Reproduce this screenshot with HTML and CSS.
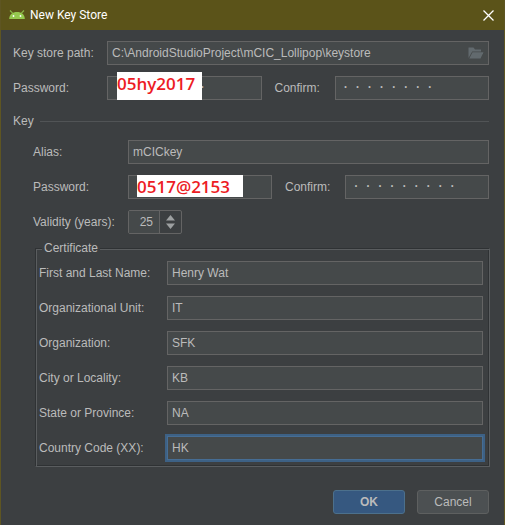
FILE: index.html
```html
<!DOCTYPE html>
<html lang="en">
<head>
<meta charset="utf-8">
<title>New Key Store</title>
<link rel="stylesheet" href="styles.css">
</head>
<body>
<form class="dialog">
  <header class="titlebar">
    <svg class="logo" width="16" height="10" viewBox="0 0 16 10" aria-hidden="true">
      <path d="M1 0.500 3.600 3.200M15 0.500 12.400 3.200" stroke="#8bb84a" stroke-width="1.200"/>
      <path d="M0.200 9C0.200 4.600 3.600 2 8 2s7.800 2.600 7.800 7z" fill="#95c94f"/>
      <circle cx="4.500" cy="6" r="0.900" fill="#fff"/>
      <circle cx="11.500" cy="6" r="0.900" fill="#fff"/>
    </svg>
    <h1 class="title">New Key Store</h1>
    <button class="close" type="button" aria-label="Close">
      <svg width="11" height="11" viewBox="0 0 11 11"><path d="M0.500 0.500l10 10M10.500 0.500l-10 10" stroke="#fff" stroke-width="1.300"/></svg>
    </button>
  </header>
  <main class="content">
    <div class="row store-row">
      <label for="path">Key store path:</label>
      <div class="holder">
        <input class="field" id="path" type="text" value="C:\AndroidStudioProject\mCIC_Lollipop\keystore">
        <button class="browse" type="button" aria-label="Browse">
          <svg width="16" height="12" viewBox="0 0 16 12"><path d="M0.500 11V0.500h5l1.500 2h6V4.500H4.200z" fill="#626a6e"/><path d="M1.300 11.500 4.500 5.200h11L12.500 11.500z" fill="#626a6e"/></svg>
        </button>
      </div>
    </div>
    <div class="row store-row">
      <label for="store-pass">Password:</label>
      <div class="pair">
        <div class="holder">
          <input class="field secret" id="store-pass" type="text" value="· · · · · · · ·">
          <span class="note note-tall">05hy2017</span>
        </div>
        <label for="store-confirm">Confirm:</label>
        <input class="field secret" id="store-confirm" type="text" value="· · · · · · · ·">
      </div>
    </div>
    <section class="key-section">
      <h2 class="section-title">Key</h2>
      <div class="key">
        <div class="row key-row">
          <label for="alias">Alias:</label>
          <input class="field" id="alias" type="text" value="mCICkey">
        </div>
        <div class="row key-row">
          <label for="key-pass">Password:</label>
          <div class="pair">
            <div class="holder">
              <input class="field secret" id="key-pass" type="text" value="· · · · · · · · ·">
              <span class="note note-wide">0517@2153</span>
            </div>
            <label for="key-confirm">Confirm:</label>
            <input class="field secret" id="key-confirm" type="text" value="· · · · · · · · ·">
          </div>
        </div>
        <div class="row key-row">
          <label for="validity">Validity (years):</label>
          <div class="spinner">
            <input id="validity" type="text" value="25">
            <div class="arrows">
              <button class="arrow" type="button" aria-label="Increase"><svg width="9" height="6" viewBox="0 0 9 6"><path d="M0 5.500 4.500 0 9 5.500z" fill="#9da0a1"/></svg></button>
              <button class="arrow" type="button" aria-label="Decrease"><svg width="9" height="6" viewBox="0 0 9 6"><path d="M0 0.500h9L4.500 6z" fill="#9da0a1"/></svg></button>
            </div>
          </div>
        </div>
        <fieldset class="certificate">
          <legend>Certificate</legend>
          <div class="row cert-row"><label for="name">First and Last Name:</label><input class="field" id="name" type="text" value="Henry Wat"></div>
          <div class="row cert-row"><label for="unit">Organizational Unit:</label><input class="field" id="unit" type="text" value="IT"></div>
          <div class="row cert-row"><label for="org">Organization:</label><input class="field" id="org" type="text" value="SFK"></div>
          <div class="row cert-row"><label for="city">City or Locality:</label><input class="field" id="city" type="text" value="KB"></div>
          <div class="row cert-row"><label for="state">State or Province:</label><input class="field" id="state" type="text" value="NA"></div>
          <div class="row cert-row"><label for="country">Country Code (XX):</label><input class="field active" id="country" type="text" value="HK"></div>
        </fieldset>
      </div>
    </section>
    <footer class="actions">
      <button class="btn primary" type="submit">OK</button>
      <button class="btn" type="button">Cancel</button>
    </footer>
  </main>
</form>
</body>
</html>
```
FILE: styles.css
```css
* {
  box-sizing: border-box;
}

body {
  margin: 0;
  background: #3c3f41;
  color: #bbbbbb;
  font: 12px/16px "Liberation Sans", Arial, sans-serif;
}

.dialog {
  min-height: 100vh;
  border: 1px solid #5e5522;
  border-top: 0;
  border-bottom: 0;
}

input,
button {
  margin: 0;
  padding: 0;
  border: 0;
  background: none;
  color: inherit;
  font: inherit;
  outline: 0;
}

.titlebar {
  display: flex;
  align-items: center;
  height: 30px;
  padding: 0 10px 0 8px;
  background: #5b5319;
  color: #ffffff;
}

.title {
  flex: 1;
  margin: 0 0 0 5px;
  font: 12px/16px Roboto, "Noto Sans", sans-serif;
}

.logo,
.close svg,
.browse svg,
.arrow svg {
  display: block;
}

.content {
  padding: 11px 15px 10px 12px;
}

.row {
  display: grid;
  align-items: center;
  margin-bottom: 11px;
}

.store-row {
  grid-template-columns: 94px 1fr;
}

.key-row {
  grid-template-columns: 95px 1fr;
}

.cert-row {
  grid-template-columns: 128px 1fr;
}

label {
  white-space: nowrap;
}

.field {
  display: block;
  width: 100%;
  min-width: 0;
  height: 24px;
  padding: 0 4px;
  border: 1px solid #646464;
  background: #45494a;
}

.secret {
  padding: 0 7px 2px;
  font: bold 10px/16px "DejaVu Sans Mono", monospace;
}

.active {
  border-color: #466d94;
  box-shadow: 0 0 0 2px #3d6185;
}

.holder {
  position: relative;
}

.browse {
  position: absolute;
  top: 6px;
  right: 5px;
}

.pair {
  display: grid;
  grid-template-columns: 1fr 47px 1fr;
  align-items: center;
  gap: 13px;
}

.note {
  position: absolute;
  background: #ffffff;
  color: #ed1c24;
  font: 600 17px/24px "Open Sans", "Noto Sans", sans-serif;
}

.note-tall {
  top: -4px;
  left: 10px;
  width: 85px;
  height: 28px;
}

.note-wide {
  top: 0;
  left: 9px;
  width: 106px;
  height: 22px;
}

.key-section {
  margin-top: 13px;
}

.section-title {
  display: flex;
  align-items: center;
  gap: 6px;
  margin: 0 0 11px;
  font: inherit;
}

.section-title::after {
  content: "";
  flex: 1;
  height: 1px;
  background: #515456;
}

.key {
  padding-left: 20px;
}

.spinner {
  display: flex;
  width: 54px;
  height: 24px;
  border: 1px solid #646464;
  border-radius: 2px;
}

.spinner input {
  width: 31px;
  padding-right: 6px;
  border-right: 1px solid #646464;
  background: #45494a;
  text-align: right;
}

.arrows {
  display: flex;
  flex: 1;
  flex-direction: column;
  align-items: center;
  justify-content: center;
  gap: 2px;
}

.certificate {
  margin: -5px -1px 0 2px;
  padding: 5px 6px 6px 3px;
  border: 1px solid;
  border-color: #2f3234 #5a5d5f #5a5d5f #2f3234;
  box-shadow: inset 1px 1px #5a5d5f, inset -1px -1px #2f3234;
}

.certificate .row:last-child {
  margin-bottom: 0;
}

legend {
  margin-left: 3px;
  padding: 0 2px;
  background: #3c3f41;
}

.actions {
  display: flex;
  justify-content: flex-end;
  gap: 12px;
  margin-top: 23px;
}

.btn {
  width: 72px;
  height: 24px;
  border: 1px solid #5e6060;
  border-radius: 3px;
  background: #4c5052;
}

.primary {
  border-color: #4c708c;
  background: #365880;
  font-weight: bold;
}
```
